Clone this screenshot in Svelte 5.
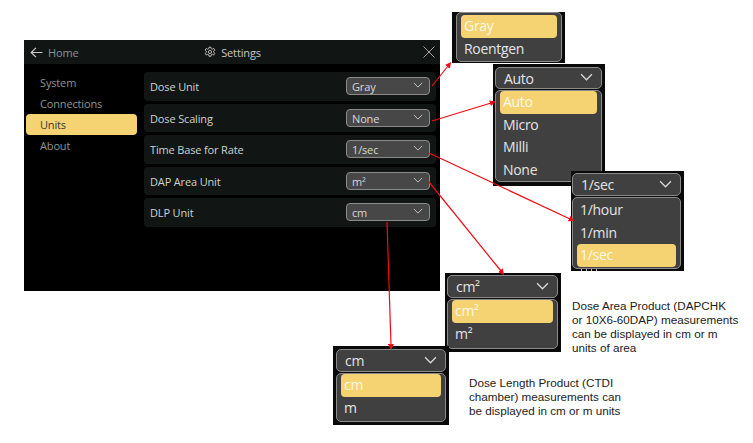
<script>
  const nav = ['System', 'Connections', 'Units', 'About'];
  const rows = [
    { label: 'Dose Unit', value: 'Gray' },
    { label: 'Dose Scaling', value: 'None' },
    { label: 'Time Base for Rate', value: '1/sec' },
    { label: 'DAP Area Unit', value: 'm²' },
    { label: 'DLP Unit', value: 'cm' }
  ];
  const popups = [
    { id: 'gray', items: ['Gray', 'Roentgen'], active: 'Gray' },
    { id: 'auto', select: 'Auto', items: ['Auto', 'Micro', 'Milli', 'None'], active: 'Auto' },
    { id: 'rate', select: '1/sec', items: ['1/hour', '1/min', '1/sec'], active: '1/sec' },
    { id: 'area', select: 'cm²', items: ['cm²', 'm²'], active: 'cm²' },
    { id: 'len', select: 'cm', items: ['cm', 'm'], active: 'cm' }
  ];
  const arrows = [
    [432, 86, 448, 66],
    [432, 121, 491, 103],
    [429, 153, 570, 219],
    [429, 182, 501, 271],
    [387, 222, 391, 345]
  ];
</script>

{#snippet chevron()}
  <svg class="chev" viewBox="0 0 12 7" aria-hidden="true"><path d="M1 1l5 5 5-5" /></svg>
{/snippet}

<div class="canvas">
  <section class="panel">
    <header class="bar">
      <div class="home">
        <svg class="back" viewBox="0 0 14 12" aria-hidden="true"><path d="M13.5 6H1.2M6.4 1L1.2 6l5.2 5" /></svg>
        <span>Home</span>
      </div>
      <div class="title">
        <svg class="gear" viewBox="0 0 24 24" aria-hidden="true">
          <circle cx="12" cy="12" r="3.2" />
          <path d="M10 2.5h4l.6 3 2.3 1 2.6-1.6 2.1 3.4-2.3 2v2.4l2.3 2-2.1 3.4-2.6-1.6-2.3 1-.6 3h-4l-.6-3-2.3-1-2.6 1.6-2.1-3.4 2.3-2v-2.4l-2.3-2 2.1-3.4 2.6 1.6 2.3-1z" />
        </svg>
        <span>Settings</span>
      </div>
      <svg class="close" viewBox="0 0 12 12" aria-hidden="true"><path d="M.5.5l11 11M11.5.5l-11 11" /></svg>
    </header>
    <div class="body">
      <nav class="nav">
        {#each nav as item}
          <div class="nav-item" class:on={item === 'Units'}><span>{item}</span></div>
        {/each}
      </nav>
      <div class="rows">
        {#each rows as row}
          <div class="row">
            <span class="lbl">{row.label}</span>
            <div class="select"><span class="lbl">{row.value}</span>{@render chevron()}</div>
          </div>
        {/each}
      </div>
    </div>
  </section>

  {#each popups as p}
    <div class="popup {p.id}">
      {#if p.select}
        <div class="head"><span>{p.select}</span>{@render chevron()}</div>
      {/if}
      <div class="menu">
        {#each p.items as item}
          <div class="opt" class:on={item === p.active}>{item}</div>
        {/each}
      </div>
      {#if p.id === 'rate'}<div class="sliver"></div>{/if}
    </div>
  {/each}

  <p class="note note-area">Dose Area Product (DAPCHK<br />or 10X6-60DAP) measurements<br />can be displayed in cm or m<br />units of area</p>
  <p class="note note-len">Dose Length Product (CTDI<br />chamber) measurements can<br />be displayed in cm or m units</p>

  <svg class="arrows" viewBox="0 0 753 443" aria-hidden="true">
    <defs>
      <marker id="tip" viewBox="0 0 6 6" refX="1" refY="3" markerWidth="6" markerHeight="6" markerUnits="userSpaceOnUse" orient="auto">
        <path d="M0 0L6 3L0 6z" fill="#f00c14" />
      </marker>
    </defs>
    {#each arrows as a}
      <line x1={a[0]} y1={a[1]} x2={a[2]} y2={a[3]} marker-end="url(#tip)" />
    {/each}
  </svg>
</div>

<style>
  :global(body) {
    margin: 0;
    background: #fff;
  }
  .canvas {
    position: relative;
    width: 753px;
    height: 443px;
    overflow: hidden;
    background: #fff;
    font-family: "Open Sans", "Noto Sans", sans-serif;
  }
  .panel {
    position: absolute;
    left: 24px;
    top: 40px;
    width: 416px;
    height: 251px;
    display: flex;
    flex-direction: column;
    background: #000;
    color: #cfd1cf;
    font-size: 11px;
    letter-spacing: -0.15px;
  }
  .bar {
    flex: none;
    height: 24px;
    display: grid;
    grid-template-columns: 1fr auto 1fr;
    align-items: center;
    padding: 0 5px 0 6px;
    background: #111614;
  }
  .home {
    display: flex;
    align-items: center;
    gap: 5px;
    color: #8d918f;
  }
  .back {
    width: 13px;
    height: 11px;
    fill: none;
    stroke: #c9cbc9;
    stroke-width: 1.3;
  }
  .title {
    display: flex;
    align-items: center;
    gap: 5px;
    color: #c4c6c4;
  }
  .gear {
    width: 12px;
    height: 12px;
    fill: none;
    stroke: #d0d2d0;
    stroke-width: 1.7;
  }
  .close {
    justify-self: end;
    width: 12px;
    height: 12px;
    fill: none;
    stroke: #a4a6a4;
    stroke-width: 1;
  }
  .body {
    flex: 1;
    display: flex;
    padding-top: 8px;
  }
  .nav {
    flex: none;
    width: 111px;
    margin-left: 2px;
    margin-right: 7px;
    display: flex;
    flex-direction: column;
  }
  .nav-item {
    height: 21px;
    line-height: 22px;
    padding-left: 14px;
    border-radius: 4px;
    color: #8f9391;
  }
  .nav-item.on {
    background: #f5d272;
    color: #3a3a32;
  }
  .rows {
    flex: none;
    width: 292px;
    display: flex;
    flex-direction: column;
    gap: 3px;
  }
  .row {
    height: 28.5px;
    display: flex;
    align-items: center;
    justify-content: space-between;
    padding: 0 6px;
    border-radius: 4px;
    background: #111614;
  }
  .lbl {
    padding-top: 1px;
  }
  .select {
    width: 84px;
    height: 18px;
    box-sizing: border-box;
    display: flex;
    align-items: center;
    justify-content: space-between;
    padding: 0 6px 0 5px;
    border: 1px solid #8b8b8b;
    border-radius: 4px;
    background: #474747;
    color: #d8d8d8;
  }
  .chev {
    width: 10px;
    height: 6px;
    fill: none;
    stroke: #d8d8d8;
    stroke-width: 1;
    margin-bottom: 2px;
  }
  .popup {
    position: absolute;
    box-sizing: border-box;
    overflow: hidden;
    background: #0a0a0a;
    color: #e4e4e4;
    font-size: 14px;
    letter-spacing: -0.3px;
  }
  .gray { left: 452px; top: 12px; width: 113px; height: 51px; padding: 0 3px 1px 4px; }
  .auto { left: 493px; top: 64px; width: 112px; height: 122px; padding: 3px 3px 3px 2px; }
  .rate { left: 571px; top: 171px; width: 113px; height: 100px; padding: 2px 3px 0 1px; }
  .area { left: 445px; top: 273px; width: 116px; height: 79px; padding: 2px 3px 3px 2px; }
  .len  { left: 333px; top: 346px; width: 116px; height: 79px; padding: 3px 3px 3px 3px; }
  .head {
    height: 23px;
    box-sizing: border-box;
    display: flex;
    align-items: center;
    justify-content: space-between;
    padding: 0 8px;
    border: 1px solid #8b8b8b;
    border-radius: 5px;
    background: #404040;
  }
  .auto .head {
    height: 22px;
  }
  .head .chev {
    width: 13px;
    height: 8px;
    stroke-width: 1.2;
  }
  .menu {
    margin-top: 1px;
    height: calc(100% - 24px);
    box-sizing: border-box;
    padding: 0 4px;
    border: 1px solid #8b8b8b;
    border-radius: 5px;
    background: #404040;
  }
  .gray .menu {
    margin-top: 0;
    height: 100%;
    padding-top: 2px;
  }
  .rate .menu {
    height: 72px;
    padding-top: 1px;
  }
  .opt {
    height: 22.5px;
    line-height: 21px;
    padding-left: 3px;
    border-radius: 4px;
  }
  .opt.on {
    background: #f5d272;
    color: #fdf8e6;
  }
  .sliver {
    width: 16px;
    height: 2px;
    margin: 0 0 0 9px;
    background: repeating-linear-gradient(90deg, #bdbdbd 0 1px, #0a0a0a 1px 5px);
  }
  .note {
    position: absolute;
    margin: 0;
    font-family: "Liberation Sans", Arial, sans-serif;
    font-size: 11.7px;
    line-height: 14px;
    color: #1c1c1c;
    white-space: nowrap;
  }
  .note-area { left: 572px; top: 299px; }
  .note-len { left: 469px; top: 376px; }
  .arrows {
    position: absolute;
    inset: 0;
    width: 753px;
    height: 443px;
    pointer-events: none;
  }
  .arrows line {
    stroke: #f00c14;
    stroke-width: 1.2;
  }
</style>
